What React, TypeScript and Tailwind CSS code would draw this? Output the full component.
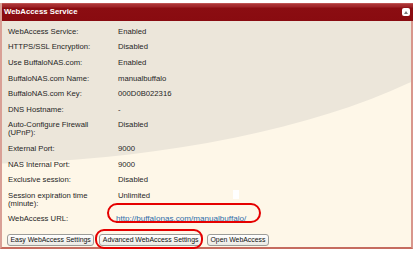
import React from "react";

type Row = { label: string[]; value: string; link?: boolean };

const rows: Row[] = [
  { label: ["WebAccess Service:"], value: "Enabled" },
  { label: ["HTTPS/SSL Encryption:"], value: "Disabled" },
  { label: ["Use BuffaloNAS.com:"], value: "Enabled" },
  { label: ["BuffaloNAS.com Name:"], value: "manualbuffalo" },
  { label: ["BuffaloNAS.com Key:"], value: "000D0B022316" },
  { label: ["DNS Hostname:"], value: "-" },
  { label: ["Auto-Configure Firewall", "(UPnP):"], value: "Disabled" },
  { label: ["External Port:"], value: "9000" },
  { label: ["NAS Internal Port:"], value: "9000" },
  { label: ["Exclusive session:"], value: "Disabled" },
  { label: ["Session expiration time", "(minute):"], value: "Unlimited" },
  { label: ["WebAccess URL:"], value: "http://buffalonas.com/manualbuffalo/", link: true },
];

function Btn({ children }: { children: React.ReactNode }) {
  return (
    <button className="h-[12px] px-[2.5px] rounded-[3px] border border-[#9c9c98] bg-[linear-gradient(#ffffff,#ebeae4)] text-[6.9px] leading-[10px] text-[#111] whitespace-nowrap">
      {children}
    </button>
  );
}

export default function App() {
  return (
    <div className="relative w-[413px] h-[253px] bg-white pt-[3px] font-['Liberation_Sans',Arial,sans-serif] overflow-hidden">
      <div className="w-[413px] border-l-2 border-r-2 border-b-2 border-l-[#d9a096] border-r-[#d8968c] border-b-[#c56c5f]">
        {/* Header */}
        <div className="h-[18px] -mr-[2px] flex items-center justify-between pl-[2px] pr-[3px] bg-[linear-gradient(#c86462_0px,#aa3234_1.5px,#9e2328_4px,#8b0d12_5px,#890b10_100%)]">
          <span className="text-white font-bold text-[7.8px] leading-[10px]">WebAccess Service</span>
          <div className="w-[8px] h-[8px] rounded-[2px] bg-white flex items-center justify-center">
            <div className="w-0 h-0 border-l-[2.5px] border-r-[2.5px] border-b-[3px] border-l-transparent border-r-transparent border-b-[#777]" />
          </div>
        </div>

        {/* Body */}
        <div className="relative overflow-hidden bg-[#fef7e8] h-[226px] pt-[3px] px-[6px]">
          <div className="absolute left-[-621px] top-[-301px] w-[1160px] h-[444px] rounded-[50%] bg-[#ece6da]" />
          <div className="relative text-[7.7px] leading-[8px] text-[#1f1f1f]">
            {rows.map((r) => (
              <div key={r.label[0]} className="flex py-[3.8px]">
                <div className="w-[110px] shrink-0">
                  {r.label.map((l) => (
                    <div key={l}>{l}</div>
                  ))}
                </div>
                {r.link ? (
                  <span className="-ml-[2px] text-[8.1px] text-[#2f6ca8] underline">{r.value}</span>
                ) : (
                  <span>{r.value}</span>
                )}
              </div>
            ))}
          </div>
          <div className="relative flex gap-[5px] mt-[7px] -ml-[1px]">
            <Btn>Easy WebAccess Settings</Btn>
            <Btn>Advanced WebAccess Settings</Btn>
            <Btn>Open WebAccess</Btn>
          </div>
        </div>
      </div>

      {/* annotations */}
      <div className="absolute left-[233px] top-[190px] w-[6px] h-[9px] bg-white" />
      <div className="absolute left-[107px] top-[203px] w-[154px] h-[20px] rounded-[10px] border-2 border-[#e50000]" />
      <div className="absolute left-[95px] top-[229px] w-[108px] h-[20px] rounded-[9px] border-2 border-[#e50000]" />
    </div>
  );
}
